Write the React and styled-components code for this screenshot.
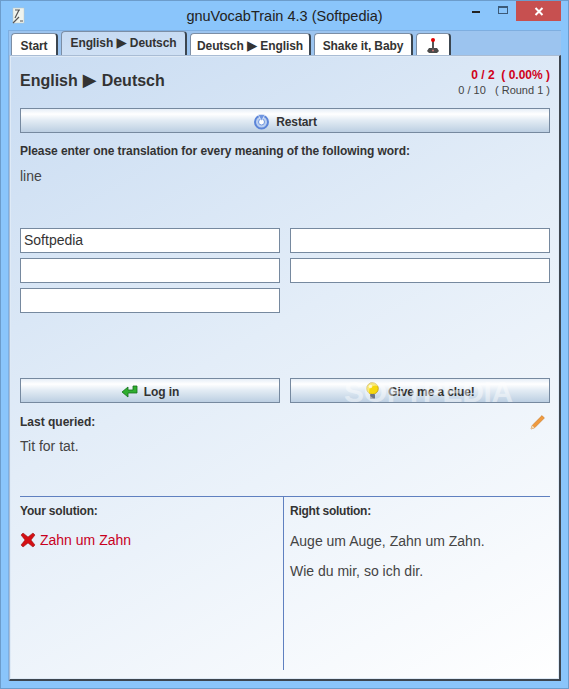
import React from 'react';
import styled, { createGlobalStyle } from 'styled-components';

const Global = createGlobalStyle`
  html, body { margin: 0; padding: 0; width: 569px; height: 689px; overflow: hidden; background: #8ac5fb; }
  * { box-sizing: border-box; }
`;
const Win = styled.div`
  width: 569px; height: 689px; background: #8ac5fb; border: 1px solid #6c9ccb;
  display: flex; flex-direction: column; font-family: "Liberation Sans", Arial, sans-serif; color: #333;
`;
const TitleBar = styled.div`
  height: 29px; flex: none; position: relative; display: flex; justify-content: center; align-items: center;
  font-size: 14.5px; color: #222;
`;
const AppIcon = styled.svg`position: absolute; left: 9px; top: 6px;`;
const Controls = styled.div`position: absolute; right: 7px; top: 0; display: flex; align-items: flex-start;`;
const Ctl = styled.div`
  width: ${p => p.$w}px; height: 20px; display: flex; align-items: center; justify-content: center;
  background: ${p => p.$bg || 'transparent'};
`;
const Body = styled.div`
  flex: 1; margin: 0 7px 7px 7px; display: flex; flex-direction: column; background: #9cc4ef;
  border-top: 1px solid #7eaee0; border-left: 1px solid #7eaee0;
`;
const Tabs = styled.div`height: 24px; flex: none; display: flex; align-items: flex-end; padding-left: 2px; gap: 3px;`;
const Tab = styled.div`
  height: ${p => p.$active ? 24 : 22}px; width: ${p => p.$w}px; flex: none;
  background: ${p => p.$active ? 'linear-gradient(#c7dbf3,#cfe0f4)' : '#fff'}; border: 1px solid #7c8ea5; border-bottom: none;
  border-right: 2px solid #3c4650; border-radius: 4px 4px 0 0; font-size: 12px; font-weight: bold; color: #333;
  display: flex; align-items: center; justify-content: center; padding-top: ${p => p.$active ? 0 : 3}px; padding-bottom: ${p => p.$active ? 2 : 0}px;
  white-space: nowrap; letter-spacing: -.1px; line-height: 14px;
`;
const Panel = styled.div`
  flex: 1; position: relative; padding: 10px 9px 9px 10px; display: flex; flex-direction: column;
  background: linear-gradient(150deg, #c9dcf2 0%, #e3edf8 45%, #ffffff 100%);
  border: 1px solid #a9bcd4; border-right: 2px solid #3d4650; border-bottom: 2px solid #3d4650;
  box-shadow: inset 0 0 0 1px #dfeaf6;
`;
const Head = styled.div`display: flex; justify-content: space-between; height: 42px; flex: none;`;
const H1 = styled.div`font-size: 16px; font-weight: bold; color: #333; line-height: 20px; padding-top: 5px; height: 25px; word-spacing: .6px;`;
const Stats = styled.div`display: flex; flex-direction: column; align-items: flex-end; font-size: 12px; padding-top: 1px;`;
const Score = styled.div`font-weight: bold; color: #d0021b; line-height: 16px; white-space: pre;`;
const Round = styled.div`font-size: 11px; color: #444; line-height: 15px; white-space: pre;`;
const Btn = styled.div`
  height: 25px; flex: ${p => p.$half ? '0 0 260px' : 'none'}; border: 1px solid #76899f;
  background: linear-gradient(#e6eef7 0%, #ffffff 22%, #e2ebf4 50%, #bccfe2 100%);
  display: flex; align-items: center; justify-content: center; gap: ${p => p.$gap || 6}px;
  font-size: 12px; font-weight: bold; color: #333; letter-spacing: -.1px; padding-top: 2px;
`;
const Label = styled.div`font-size: 12px; font-weight: bold; color: #333; line-height: 14px; letter-spacing: ${p => p.$ls || 0}px;`;
const Word = styled.div`font-size: 14px; color: #444; line-height: 16px;`;
const Prompt = styled(Label)`margin-top: 11px; letter-spacing: -.07px;`;
const QueryWord = styled(Word)`margin-top: 10px; height: 52px;`;
const Inputs = styled.div`display: grid; grid-template-columns: 260px 260px; gap: 5px 10px; height: 150px; align-content: start; margin-top: 8px;`;
const Input = styled.div`
  height: 25px; background: #fff; border: 1px solid #76899f; font-size: 14px; color: #333; padding: 0 3px; line-height: 23px;
`;
const ButtonRow = styled.div`display: flex; gap: 10px;`;
const LastRow = styled.div`display: flex; justify-content: space-between; align-items: flex-start; margin-top: 12px; padding-right: 4px; height: 14px;`;
const LastWord = styled(Word)`margin-top: 9px; height: 58px;`;
const Solutions = styled.div`flex: 1; display: grid; grid-template-columns: 264px 1fr; border-top: 1px solid #5f80c0;`;
const SolLeft = styled.div`border-right: 1px solid #5f80c0; padding-top: 7px;`;
const SolRight = styled.div`padding: 7px 0 0 6px;`;
const Wrong = styled.div`display: flex; align-items: center; gap: 4px; font-size: 14px; color: #c8001e; margin-top: 13px; height: 18px;`;
const Sol = styled(Word)`margin-top: ${p => p.$mt}px;`;
const Mark = styled.div`
  position: absolute; left: 334px; top: 317px; font-size: 30px; font-weight: bold; letter-spacing: -.3px; color: rgba(255,255,255,.45);
  pointer-events: none; line-height: 38px;
`;
const Tri = styled.span`font-family: "DejaVu Sans", sans-serif; font-size: 1.12em; line-height: 1;`;

const Arrow = () => <Tri>{'\u25B6'}</Tri>;

const App = () => (
  <Win>
    <Global />
    <TitleBar>
      <AppIcon width="16" height="18" viewBox="0 0 16 18">
        <rect x="3" y="1" width="11" height="15" fill="#eef3ee" stroke="#c0c8c0" strokeWidth=".5" />
        <path d="M5 3h5M9 3L5 11M3 16l6-6M10 14h3" stroke="#555" strokeWidth="1.2" fill="none" />
      </AppIcon>
      gnuVocabTrain 4.3 (Softpedia)
      <Controls>
        <Ctl $w={28}><svg width="8" height="3"><rect width="8" height="2" y="1" fill="#222" /></svg></Ctl>
        <Ctl $w={26}><svg width="10" height="8" style={{ marginBottom: 3 }}><rect x=".5" y=".5" width="9" height="7" fill="none" stroke="#3c5a78" /><rect x=".5" y=".5" width="9" height="1.5" fill="#3c5a78" /></svg></Ctl>
        <Ctl $w={45} $bg="#c75050"><svg width="10" height="9" viewBox="0 0 10 9"><path d="M1.5 1l7 7M8.5 1l-7 7" stroke="#fff" strokeWidth="2" /></svg></Ctl>
      </Controls>
    </TitleBar>
    <Body>
      <Tabs>
        <Tab $w={47}>Start</Tab>
        <Tab $w={126} $active><span>English <Arrow /> Deutsch</span></Tab>
        <Tab $w={121}><span>Deutsch <Arrow /> English</span></Tab>
        <Tab $w={99}>Shake it, Baby</Tab>
        <Tab $w={35}>
          <svg width="18" height="18" viewBox="0 0 18 18">
            <path d="M3 14l2-3h8l2 3-2 2H5z" fill="#4a4a4a" />
            <rect x="8" y="3" width="2" height="9" fill="#555" />
            <circle cx="9" cy="3" r="2" fill="#e00000" />
            <circle cx="9" cy="13.5" r="1" fill="#c77" />
          </svg>
        </Tab>
      </Tabs>
      <Panel>
        <Head>
          <H1>English <Arrow /> Deutsch</H1>
          <Stats>
            <Score>0 / 2  ( 0.00% )</Score>
            <Round>0 / 10   ( Round 1 )</Round>
          </Stats>
        </Head>
        <Btn>
          <svg width="17" height="17" viewBox="0 0 17 17">
            <circle cx="8.5" cy="9" r="6.5" fill="#bcd0f0" stroke="#5b84d8" strokeWidth="2" />
            <circle cx="8.5" cy="9" r="3" fill="#fff" stroke="#6e95e0" />
            <path d="M5 1.5h7L8.5 8z" fill="#6e95e0" stroke="#fff" strokeWidth=".6" />
          </svg>
          Restart
        </Btn>
        <Prompt>Please enter one translation for every meaning of the following word:</Prompt>
        <QueryWord>line</QueryWord>
        <Inputs>
          <Input>Softpedia</Input>
          <Input />
          <Input />
          <Input />
          <Input />
        </Inputs>
        <ButtonRow>
          <Btn $half>
            <svg width="17" height="13" viewBox="0 0 17 13">
              <path d="M16 1v7H7v4L1 7l6-5v3h5V1z" fill="#2fae2f" stroke="#14701a" strokeWidth=".8" />
            </svg>
            Log in
          </Btn>
          <Btn $half $gap={8}>
            <svg width="15" height="19" viewBox="0 0 15 19">
              <circle cx="7.5" cy="6.5" r="5.8" fill="#f6d80e" stroke="#c09a10" strokeWidth=".8" />
              <circle cx="5.5" cy="4.5" r="1.8" fill="#fff5b0" />
              <rect x="5" y="12" width="5" height="5" rx="1" fill="#6a7488" />
            </svg>
            Give me a clue!
          </Btn>
        </ButtonRow>
        <LastRow>
          <Label>Last queried:</Label>
          <svg width="16" height="16" viewBox="0 0 16 16" style={{ marginTop: -1 }}>
            <path d="M1 15l1.2-3.6L12 1.6 14.4 4l-9.8 9.8z" fill="#f09a3e" stroke="#c57522" strokeWidth=".6" />
            <path d="M1 15l1.2-3.6 2.4 2.4z" fill="#f4dcb8" />
          </svg>
        </LastRow>
        <LastWord>Tit for tat.</LastWord>
        <Solutions>
          <SolLeft>
            <Label $ls={-.2}>Your solution:</Label>
            <Wrong>
              <svg width="16" height="16" viewBox="0 0 16 16">
                <path d="M3 1l5 4 5-4 2 2-4 5 4 5-2 2-5-4-5 4-2-2 4-5-4-5z" fill="#d40f14" stroke="#8c0a0a" strokeWidth=".5" />
              </svg>
              Zahn um Zahn
            </Wrong>
          </SolLeft>
          <SolRight>
            <Label $ls={-.25}>Right solution:</Label>
            <Sol $mt={15}>Auge um Auge, Zahn um Zahn.</Sol>
            <Sol $mt={14}>Wie du mir, so ich dir.</Sol>
          </SolRight>
        </Solutions>
        <Mark>SOFTPEDIA</Mark>
      </Panel>
    </Body>
  </Win>
);
export default App;
